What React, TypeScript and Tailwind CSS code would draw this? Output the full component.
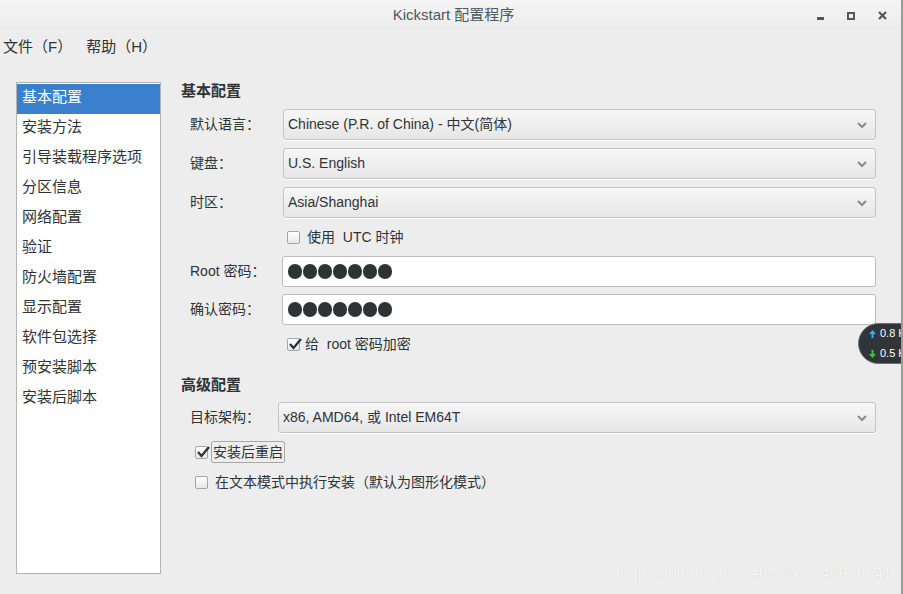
import React from "react";

const font = { fontFamily: '"Liberation Sans", "Noto Sans CJK SC", sans-serif' };

function Chevron() {
  return (
    <svg width="12" height="8" viewBox="0 0 12 8" className="shrink-0">
      <path d="M2 2 L6 6 L10 2" fill="none" stroke="#8a8a8a" strokeWidth="2" />
    </svg>
  );
}

function Select({ text }: { text: string }) {
  return (
    <div className="flex items-center justify-between h-[31px] flex-1 rounded-[3px] border border-[#c4c4c4] bg-gradient-to-b from-[#f7f7f7] to-[#e6e6e6] pl-[4px] pr-[7px] text-[14px] text-[#2e3436] shadow-[0_1px_0_#ffffff]">
      <span>{text}</span>
      <Chevron />
    </div>
  );
}

function Dots() {
  return (
    <div className="flex gap-[1px]">
      {[0, 1, 2, 3, 4, 5, 6].map((i) => (
        <span key={i} className="w-[14px] h-[15px] rounded-full bg-[#2e3436]" />
      ))}
    </div>
  );
}

function Input() {
  return (
    <div className="flex items-center h-[31px] flex-1 rounded-[3px] border border-[#bdbdbd] bg-white pl-[5px]">
      <Dots />
    </div>
  );
}

function Check({ checked }: { checked?: boolean }) {
  return (
    <span className="relative inline-flex w-[13px] h-[13px] shrink-0 rounded-[2px] border border-[#a5a5a5] bg-gradient-to-b from-white to-[#e8e8e8]">
      {checked && (
        <svg width="15" height="14" viewBox="0 0 15 14" className="absolute left-[0px] top-[-2px]">
          <path d="M2 7 L5.5 11 L13 2" fill="none" stroke="#2e3436" strokeWidth="2.4" />
        </svg>
      )}
    </span>
  );
}

const items = [
  "基本配置",
  "安装方法",
  "引导装载程序选项",
  "分区信息",
  "网络配置",
  "验证",
  "防火墙配置",
  "显示配置",
  "软件包选择",
  "预安装脚本",
  "安装后脚本",
];

export default function App() {
  return (
    <div style={font} className="relative w-[903px] h-[594px] overflow-hidden bg-[#ededed] text-[#2e3436] border-r-[2px] border-[#9c9c9c]">
      {/* Title bar */}
      <div className="relative flex items-center justify-center h-[31px] pl-[6px] bg-gradient-to-b from-[#f5f5f5] to-[#ebebeb]">
        <span className="text-[15px] text-[#4b5961]">Kickstart 配置程序</span>
        <div className="absolute right-[14px] top-0 h-[31px] flex items-center gap-[23px]">
          <span className="w-[7px] h-[3px] bg-[#4b5961] mt-[6px]" />
          <span className="w-[8px] h-[8px] border-[2px] border-[#4b5961]" />
          <svg width="9" height="9" viewBox="0 0 9 9">
            <path d="M1 1 L8 8 M8 1 L1 8" stroke="#4b5961" strokeWidth="2.2" />
          </svg>
        </div>
      </div>
      {/* Menu bar */}
      <div className="flex items-center h-[32px] gap-[14px] pl-[3px] text-[15px] text-[#2e3436]">
        <span>文件（F）</span>
        <span>帮助（H）</span>
      </div>
      {/* Main */}
      <div className="flex pl-[16px] pt-[19px] gap-[20px]">
        <div className="w-[145px] h-[492px] border border-[#b4b4b4] bg-white pt-[1px]">
          {items.map((t, i) => (
            <div
              key={t}
              className={
                "h-[30px] flex items-center pl-[5px] pb-[3px] text-[15px] " +
                (i === 0 ? "bg-[#3b80cc] text-white" : "text-[#2e3436]")
              }
            >
              {t}
            </div>
          ))}
        </div>
        <div className="flex flex-col w-[695px] -mt-[1px]">
          <div className="h-[20px] flex items-center text-[15px] font-bold">基本配置</div>
          <div className="flex flex-col gap-[8px] pl-[9px] mt-[8px]">
            <div className="flex items-center">
              <span className="w-[93px] text-[14px]">默认语言：</span>
              <Select text="Chinese (P.R. of China) - 中文(简体)" />
            </div>
            <div className="flex items-center">
              <span className="w-[93px] text-[14px]">键盘：</span>
              <Select text="U.S. English" />
            </div>
            <div className="flex items-center">
              <span className="w-[93px] text-[14px]">时区：</span>
              <Select text="Asia/Shanghai" />
            </div>
          </div>
          <div className="flex items-center gap-[7px] pl-[106px] h-[20px] mt-[9px] text-[14px]">
            <Check />
            <span>使用&nbsp; UTC 时钟</span>
          </div>
          <div className="flex flex-col gap-[7px] pl-[9px] mt-[9px]">
            <div className="flex items-center">
              <span className="w-[92px] text-[14px]">Root 密码：</span>
              <Input />
            </div>
            <div className="flex items-center">
              <span className="w-[92px] text-[14px]">确认密码：</span>
              <Input />
            </div>
          </div>
          <div className="flex items-center gap-[5px] pl-[106px] h-[20px] mt-[9px] text-[14px]">
            <Check checked />
            <span>给&nbsp; root 密码加密</span>
          </div>
          <div className="h-[20px] flex items-center text-[15px] font-bold mt-[21px]">高级配置</div>
          <div className="flex items-center pl-[9px] mt-[7px]">
            <span className="w-[88px] text-[14px]">目标架构：</span>
            <Select text="x86, AMD64, 或  Intel EM64T" />
          </div>
          <div className="flex items-center gap-[3px] pl-[14px] mt-[8px] h-[22px] text-[14px]">
            <Check checked />
            <span className="border border-[#a8a8a8] rounded-[2px] px-[1px] h-[22px] flex items-center">安装后重启</span>
          </div>
          <div className="flex items-center gap-[7px] pl-[14px] mt-[9px] h-[20px] text-[14px]">
            <Check />
            <span>在文本模式中执行安装（默认为图形化模式）</span>
          </div>
        </div>
      </div>
      {/* Network speed widget */}
      <div className="absolute left-[858px] top-[323px] w-[60px] h-[41px] rounded-l-[21px] bg-[#30353a] border border-[#6b6f73] flex flex-col justify-center pl-[10px] gap-[9px] text-[11px] text-white">
        <div className="flex items-center gap-[4px] leading-none">
          <svg width="7" height="8" viewBox="0 0 7 8"><path d="M3.5 0 L7 4 H4.5 V8 H2.5 V4 H0 Z" fill="#3fa9f5" /></svg>
          <span>0.8 K</span>
        </div>
        <div className="flex items-center gap-[4px] leading-none">
          <svg width="7" height="8" viewBox="0 0 7 8"><path d="M3.5 8 L7 4 H4.5 V0 H2.5 V4 H0 Z" fill="#3cc43c" /></svg>
          <span>0.5 K</span>
        </div>
      </div>
      {/* Watermark */}
      <div className="absolute right-[9px] bottom-[8px] text-[16px] text-[#f7f7f7] [text-shadow:0_0_1px_#c8c8c8]" style={{ fontFamily: '"Liberation Sans", Arial, sans-serif' }}>
        https://blog.csdn.net/weixin_45936641
      </div>
    </div>
  );
}
